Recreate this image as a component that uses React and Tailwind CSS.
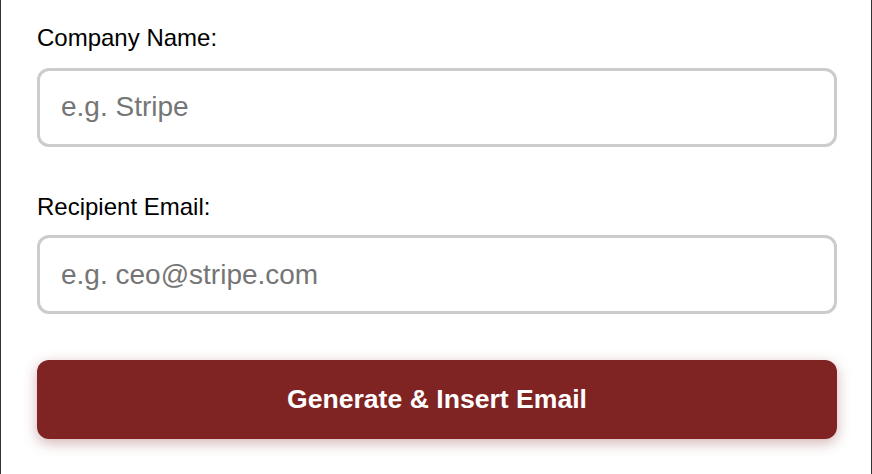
import React from "react";

export default function App() {
  return (
    <div
      className="min-h-[474px] w-full bg-white border-x border-[#333] pl-[36px] pr-[34px] pt-[24px]"
      style={{ fontFamily: '"Liberation Sans", Arial, sans-serif' }}
    >
      <div className="flex flex-col">
        <label className="text-[24px] leading-[27.6px] text-black mb-[16px]">Company Name:</label>
        <input
          type="text"
          placeholder="e.g. Stripe"
          className="h-[79px] w-full rounded-[12px] border-[3px] border-[#cccccc] bg-white pl-[21px] text-[28px] text-black placeholder:text-[#757575] outline-none"
        />
        <label className="mt-[46px] text-[24px] leading-[27.6px] text-black mb-[15px]">Recipient Email:</label>
        <input
          type="text"
          placeholder="e.g. ceo@stripe.com"
          className="h-[79px] w-full rounded-[12px] border-[3px] border-[#cccccc] bg-white pl-[21px] text-[28px] text-black placeholder:text-[#757575] outline-none"
        />
        <button
          className="mt-[46px] h-[79px] w-full rounded-[12px] bg-[#802323] text-[26.6px] font-bold text-white shadow-[0_4px_14px_rgba(128,35,35,0.35)]"
        >
          Generate &amp; Insert Email
        </button>
      </div>
    </div>
  );
}
